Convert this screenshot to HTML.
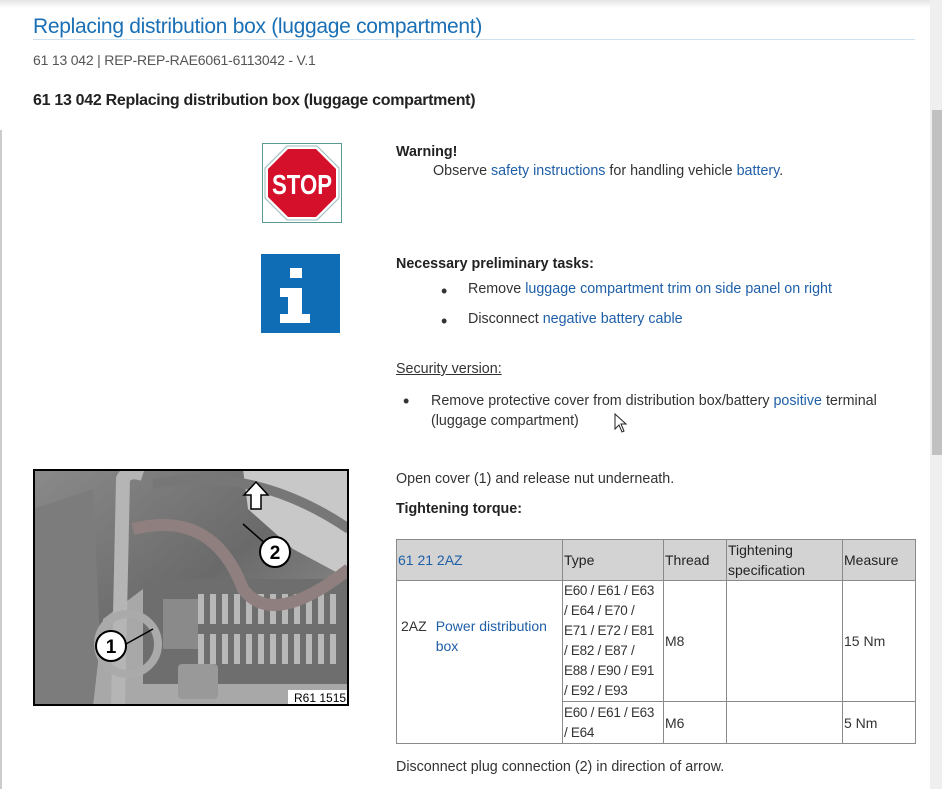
<!DOCTYPE html>
<html><head><meta charset="utf-8">
<style>
*{margin:0;padding:0;box-sizing:border-box}
body{width:942px;height:789px;overflow:hidden;background:#fff;font-family:"Liberation Sans",sans-serif;color:#333;position:relative;font-size:14.3px}
.a{position:absolute;white-space:nowrap}
.l{color:#1f5fa8}
.b{font-size:18px;line-height:14px}
table{position:absolute;left:396px;top:539px;border-collapse:collapse;table-layout:fixed;width:519px;font-size:14px;line-height:20px}
td,th{border:1px solid #8a8a8a;padding:0 1px;vertical-align:middle;text-align:left;font-weight:normal;white-space:nowrap;overflow:hidden}
th{background:#d3d3d3;color:#222;height:41px;white-space:normal}
.t{font-size:13.5px;letter-spacing:-0.3px}
</style></head><body>
<div style="position:absolute;left:0;top:0;width:930px;height:8px;background:linear-gradient(#e4e4e4,#fff)"></div>
<div style="position:absolute;left:0;top:130px;width:2px;height:659px;background:#ccc"></div>
<div style="position:absolute;left:930px;top:0;width:12px;height:789px;background:#efefef"></div>
<div style="position:absolute;left:932px;top:110px;width:10px;height:345px;background:#c1c1c1"></div>

<div class="a" style="left:33px;top:15px;font-size:21px;color:#1a6fb5;letter-spacing:-0.3px">Replacing distribution box (luggage compartment)</div>
<div style="position:absolute;left:33px;top:39px;width:882px;height:1px;background:#cfe0ee"></div>
<div class="a" style="left:33px;top:52px;font-size:14px;color:#555;letter-spacing:-0.2px">61 13 042 | REP-REP-RAE6061-6113042 - V.1</div>
<div class="a" style="left:33px;top:92px;font-size:16px;font-weight:bold;color:#222;letter-spacing:-0.3px">61 13 042 Replacing distribution box (luggage compartment)</div>

<svg class="a" style="left:262px;top:143px" width="80" height="80" viewBox="0 0 80 80">
<rect x="0.5" y="0.5" width="79" height="79" fill="#fff" stroke="#5e9a94"/>
<polygon points="25,3 55,3 77,25 77,55 55,77 25,77 3,55 3,25" fill="#fff" stroke="#9bb" stroke-width="1"/>
<polygon points="26,6 54,6 74,26 74,54 54,74 26,74 6,54 6,26" fill="#d5102a"/>
<text x="40" y="51" text-anchor="middle" font-family="Liberation Sans" font-weight="bold" font-size="28" fill="#fff" textLength="60" lengthAdjust="spacingAndGlyphs">STOP</text>
</svg>
<svg class="a" style="left:261px;top:254px" width="79" height="79" viewBox="0 0 79 79">
<rect width="79" height="79" fill="#0e6db5"/>
<rect x="29" y="14" width="12" height="10" fill="#fff"/>
<path d="M19 34 H41 V60 H49 V69 H19 V60 H27 V43 H19Z" fill="#fff"/>
</svg>

<div class="a" style="left:396px;top:144px;font-weight:bold;color:#222">Warning!</div>
<div class="a" style="left:433px;top:163px">Observe <span class="l">safety instructions</span> for handling vehicle <span class="l">battery</span>.</div>
<div class="a" style="left:396px;top:256px;font-weight:bold;color:#222">Necessary preliminary tasks:</div>
<div class="a b" style="left:441px;top:284px">•</div>
<div class="a" style="left:468px;top:281px">Remove <span class="l">luggage compartment trim on side panel on right</span></div>
<div class="a b" style="left:441px;top:314px">•</div>
<div class="a" style="left:468px;top:311px">Disconnect <span class="l">negative battery cable</span></div>
<div class="a" style="left:396px;top:361px;text-decoration:underline">Security version:</div>
<div class="a b" style="left:403px;top:394px">•</div>
<div class="a" style="left:431px;top:391px;line-height:20px">Remove protective cover from distribution box/battery <span class="l">positive</span> terminal<br>(luggage compartment)</div>
<svg class="a" style="left:614px;top:413px" width="14" height="20"><path d="M1 1 L1 16 L5 12 L8 19 L10 18 L7 11 L12 11Z" fill="#fff" stroke="#222"/></svg>

<div class="a" style="left:396px;top:471px">Open cover (1) and release nut underneath.</div>
<div class="a" style="left:396px;top:501px;font-weight:bold;color:#222">Tightening torque:</div>

<table>
<colgroup><col style="width:166px"><col style="width:101px"><col style="width:63px"><col style="width:116px"><col style="width:73px"></colgroup>
<tr><th><span style="color:#1f5fa8">61 21 2AZ</span></th><th>Type</th><th>Thread</th><th>Tightening specification</th><th>Measure</th></tr>
<tr style="height:121px"><td rowspan="2" style="vertical-align:top;padding-top:35px"><div style="display:flex;gap:9px;padding-left:3px"><span>2AZ</span><span class="l">Power distribution<br>box</span></div></td><td class="t">E60 / E61 / E63<br>/ E64 / E70 /<br>E71 / E72 / E81<br>/ E82 / E87 /<br>E88 / E90 / E91<br>/ E92 / E93</td><td>M8</td><td></td><td>15 Nm</td></tr>
<tr style="height:42px"><td class="t">E60 / E61 / E63<br>/ E64</td><td>M6</td><td></td><td>5 Nm</td></tr>
</table>
<div class="a" style="left:396px;top:759px">Disconnect plug connection (2) in direction of arrow.</div>

<svg class="a" style="left:33px;top:469px" width="316" height="237" viewBox="0 0 316 237">
<defs><linearGradient id="g" x1="0" y1="0" x2="1" y2="1"><stop offset="0" stop-color="#8a8a8a"/><stop offset="0.5" stop-color="#6a6a6a"/><stop offset="1" stop-color="#9a9a9a"/></linearGradient></defs>
<rect width="316" height="237" fill="url(#g)"/>
<path d="M0 40 L60 20 L70 237 L0 237Z" fill="#7c7c7c"/>
<path d="M210 0 L316 0 L316 110 L260 80 L215 40Z" fill="#c8c8c8"/>
<path d="M60 237 L70 150 L110 120 L316 110 L316 237Z" fill="#a8a8a8"/>
<rect x="110" y="110" width="206" height="105" fill="#6e6e6e"/>
<g fill="#b8b8b8"><rect x="165" y="125" width="6" height="30"/><rect x="177" y="125" width="6" height="30"/><rect x="189" y="125" width="6" height="30"/><rect x="201" y="125" width="6" height="30"/><rect x="213" y="125" width="6" height="30"/><rect x="225" y="125" width="6" height="30"/><rect x="237" y="125" width="6" height="30"/><rect x="249" y="125" width="6" height="30"/><rect x="261" y="125" width="6" height="30"/><rect x="273" y="125" width="6" height="30"/><rect x="285" y="125" width="6" height="30"/><rect x="297" y="125" width="6" height="30"/>
<rect x="165" y="165" width="6" height="30"/><rect x="177" y="165" width="6" height="30"/><rect x="189" y="165" width="6" height="30"/><rect x="201" y="165" width="6" height="30"/><rect x="213" y="165" width="6" height="30"/><rect x="225" y="165" width="6" height="30"/><rect x="237" y="165" width="6" height="30"/><rect x="249" y="165" width="6" height="30"/><rect x="261" y="165" width="6" height="30"/><rect x="273" y="165" width="6" height="30"/><rect x="285" y="165" width="6" height="30"/><rect x="297" y="165" width="6" height="30"/></g>
<path d="M85 237 L90 10 Q95 0 110 5" stroke="#b5b5b5" stroke-width="14" fill="none"/>
<path d="M100 60 Q180 40 210 120 Q240 160 316 100" stroke="#8f7f7f" stroke-width="12" fill="none"/>
<path d="M120 15 Q220 -5 316 60" stroke="#777" stroke-width="10" fill="none"/>
<rect x="130" y="130" width="35" height="50" fill="#8a8a8a"/>
<rect x="145" y="195" width="40" height="35" rx="4" fill="#999"/>
<circle cx="95" cy="175" r="30" fill="none" stroke="#aaa" stroke-width="8"/>
<line x1="93" y1="175" x2="120" y2="160" stroke="#000" stroke-width="1.5"/>
<line x1="242" y1="83" x2="210" y2="55" stroke="#000" stroke-width="1.5"/>
<circle cx="78" cy="177" r="15" fill="#fff" stroke="#000" stroke-width="2"/>
<text x="78" y="184" text-anchor="middle" font-family="Liberation Sans" font-weight="bold" font-size="19" fill="#000">1</text>
<circle cx="242" cy="83" r="15" fill="#fff" stroke="#000" stroke-width="2"/>
<text x="242" y="90" text-anchor="middle" font-family="Liberation Sans" font-weight="bold" font-size="19" fill="#000">2</text>
<path d="M218 26 L218 40 L228 40 L228 26 L235 26 L223 13 L211 26Z" fill="#fff" stroke="#000" stroke-width="1.5"/>
<rect x="255" y="221" width="61" height="16" fill="#fff"/>
<text x="261" y="233" font-family="Liberation Sans" font-size="12" fill="#000">R61 1515</text>
<rect x="1" y="1" width="314" height="235" fill="none" stroke="#000" stroke-width="2"/>
</svg>
</body></html>
